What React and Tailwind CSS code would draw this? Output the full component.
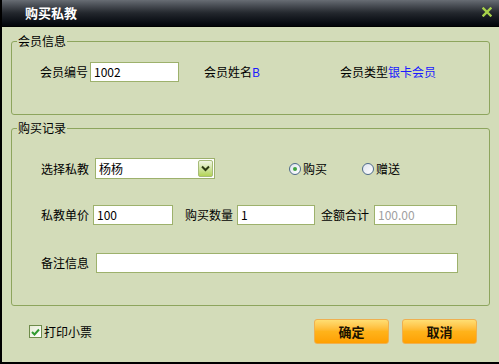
import React from "react"

const font = { fontFamily: '"Noto Sans CJK SC", "Noto Sans", sans-serif' }

function TextBox({ value, className = "", disabled }) {
    return (
        <div
            className={`h-[20px] border border-[#9db16c] bg-white pl-[3px] text-[12px] leading-[18px] ${disabled ? "text-[#a0a0a0]" : "text-black"} ${className}`}
        >
            {value}
        </div>
    )
}

function Radio({ checked, label, className = "" }) {
    return (
        <div className={`flex items-center ${className}`}>
            <div className="w-[12px] h-[12px] rounded-full border border-[#4d6a8a] bg-gradient-to-br from-[#dfe4ef] to-white flex items-center justify-center">
                {checked && <div className="w-[4px] h-[4px] rounded-full bg-[#3ea33e]" />}
            </div>
            <span className="ml-[2px] text-[12px]">{label}</span>
        </div>
    )
}

function OrangeButton({ children, className = "" }) {
    return (
        <button className={`w-[75px] h-[25px] rounded-[3px] border border-[#efb050] bg-gradient-to-b from-[#ffde72] via-[#ffb31a] to-[#ffa000] text-[13px] font-semibold text-[#1a1200] ${className}`}>
            {children}
        </button>
    )
}

export default function App() {
    return (
        <div className="w-[499px] h-[364px] flex flex-col bg-[#d3dcb9] border-l-[2px] border-b-[2px] border-black text-black overflow-hidden" style={font}>
            {/* Title bar */}
            <div className="h-[27px] shrink-0 flex items-center justify-between bg-gradient-to-b from-[#686d74] via-[#23272d] to-[#03050a] border-b border-black pl-[25px] pr-[7px] -ml-[2px]">
                <span className="text-white text-[13px] font-bold">购买私教</span>
                <svg width="10" height="10" viewBox="0 0 10 10" className="mb-[2px]">
                    <path d="M1.5 1.5 L8.5 8.5 M8.5 1.5 L1.5 8.5" stroke="#a8d24a" strokeWidth="2.4" strokeLinecap="square" />
                </svg>
            </div>

            {/* 会员信息 */}
            <fieldset className="mt-[6px] ml-[9px] w-[479px] h-[82px] border border-[#8da55d] rounded-[3px] px-0">
                <legend className="ml-[5px] px-[1px] text-[12px] leading-[16px]">会员信息</legend>
                <div className="mt-[13px] flex items-center text-[12px]">
                    <span className="ml-[28px]">会员编号</span>
                    <TextBox value="1002" className="ml-[2px] w-[89px]" />
                    <span className="ml-[25px]">会员姓名</span>
                    <span className="text-[#1a1aff]">B</span>
                    <span className="ml-[80px]">会员类型</span>
                    <span className="text-[#1a1aff]">银卡会员</span>
                </div>
            </fieldset>

            {/* 购买记录 */}
            <fieldset className="mt-[5px] ml-[9px] w-[479px] h-[186px] border border-[#8da55d] rounded-[3px] px-0">
                <legend className="ml-[5px] px-[1px] text-[12px] leading-[16px]">购买记录</legend>

                <div className="mt-[22px] flex items-center text-[12px]">
                    <span className="ml-[29px]">选择私教</span>
                    <div className="ml-[6px] w-[120px] h-[21px] border border-[#9db16c] bg-white flex items-center justify-between">
                        <span className="pl-[3px]">杨杨</span>
                        <div className="w-[15px] h-[17px] mr-[1px] rounded-[2px] border border-[#a7bb78] bg-gradient-to-b from-[#f1f5e4] to-[#b4d454] flex items-center justify-center">
                            <svg width="9" height="7" viewBox="0 0 9 7">
                                <path d="M1 1.5 L4.5 5 L8 1.5" stroke="#2d3a12" strokeWidth="2" fill="none" />
                            </svg>
                        </div>
                    </div>
                    <Radio checked label="购买" className="ml-[74px]" />
                    <Radio label="赠送" className="ml-[35px]" />
                </div>

                <div className="mt-[26px] flex items-center text-[12px]">
                    <span className="ml-[29px]">私教单价</span>
                    <TextBox value="100" className="ml-[4px] w-[80px]" />
                    <span className="ml-[12px]">购买数量</span>
                    <TextBox value="1" className="ml-[4px] w-[78px]" />
                    <span className="ml-[6px]">金额合计</span>
                    <TextBox value="100.00" disabled className="ml-[5px] w-[83px]" />
                </div>

                <div className="mt-[28px] flex items-center text-[12px]">
                    <span className="ml-[29px]">备注信息</span>
                    <TextBox value="" className="ml-[7px] w-[362px]" />
                </div>
            </fieldset>

            {/* Bottom */}
            <div className="mt-[13px] flex items-center">
                <div className="ml-[27px] flex items-center">
                    <div className="w-[13px] h-[13px] border border-[#6e8b4a] bg-gradient-to-br from-[#e6ecd6] to-white flex items-center justify-center">
                        <svg width="9" height="8" viewBox="0 0 9 8">
                            <path d="M1 4 L3.5 6.5 L8 1.5" stroke="#2f9a2f" strokeWidth="2" fill="none" />
                        </svg>
                    </div>
                    <span className="ml-[2px] text-[12px]">打印小票</span>
                </div>
                <OrangeButton className="ml-[222px]">确定</OrangeButton>
                <OrangeButton className="ml-[13px]">取消</OrangeButton>
            </div>
        </div>
    )
}
